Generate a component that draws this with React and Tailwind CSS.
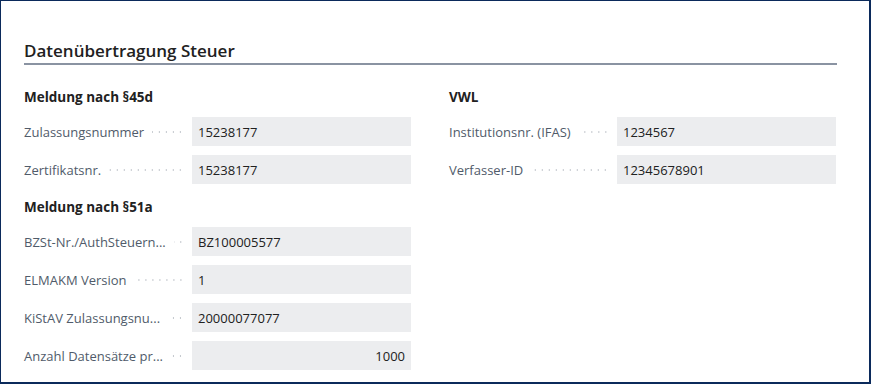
import React from 'react';

// labels are cut in the original form, keep them as shown
const left45 = [
  { label: 'Zulassungsnummer', value: '15238177' },
  { label: 'Zertifikatsnr.', value: '15238177' },
];

const left51 = [
  { label: 'BZSt-Nr./AuthSteuern...', value: 'BZ100005577' },
  { label: 'ELMAKM Version', value: '1' },
  { label: 'KiStAV Zulassungsnu...', value: '20000077077' },
  { label: 'Anzahl Datensätze pr...', value: '1000', right: true },
];

const vwl = [
  { label: 'Institutionsnr. (IFAS)', value: '1234567' },
  { label: 'Verfasser-ID', value: '12345678901' },
];

// label + leader dots + grey value box
function Field({ label, value, right }) {
  return (
    <div className="flex items-center h-[29px] mb-[9px]">
      <div className="w-[168px] flex items-center pr-[8px] min-w-0">
        <span className="text-[#505b6a] whitespace-nowrap">{label}</span>
        <span className="flex-1 min-w-[6px] h-[4px] ml-[8px] bg-[radial-gradient(circle,#c3c7cd_0.6px,transparent_1px)] bg-[length:7px_4px] bg-right bg-repeat-x" />
      </div>
      <div
        className={`flex-1 h-full bg-[#ecedef] flex items-center px-[6px] text-[#212121] ${
          right ? 'justify-end' : ''
        }`}
      >
        {value}
      </div>
    </div>
  );
}

function Group({ title, fields, className = '' }) {
  return (
    <div className={className}>
      <div className="font-bold text-[#212121] text-[13.5px] leading-[18px] mb-[11px]">{title}</div>
      {fields.map(f => (
        <Field key={f.label} {...f} />
      ))}
    </div>
  );
}

export default function App() {
  return (
    <div
      className="w-[871px] h-[384px] bg-white border-l border-t border-r-2 border-b-2 border-[#0b2a5b] pl-[23px] pt-[39px] text-[13px] leading-[18px]"
      style={{ fontFamily: '"Open Sans", "Noto Sans", sans-serif' }}
    >
      <div className="w-[813px] border-b-2 border-[#8a93a2] pb-px text-[17px] leading-[22px] font-semibold text-[#212121]">
        Datenübertragung Steuer
      </div>

      <div className="grid grid-cols-[387px_387px] gap-x-[38px] mt-[23px]">
        <div>
          <Group title="Meldung nach §45d" fields={left45} />
          <Group title="Meldung nach §51a" fields={left51} className="mt-[14px]" />
        </div>
        <div>
          <Group title="VWL" fields={vwl} />
        </div>
      </div>
    </div>
  );
}
